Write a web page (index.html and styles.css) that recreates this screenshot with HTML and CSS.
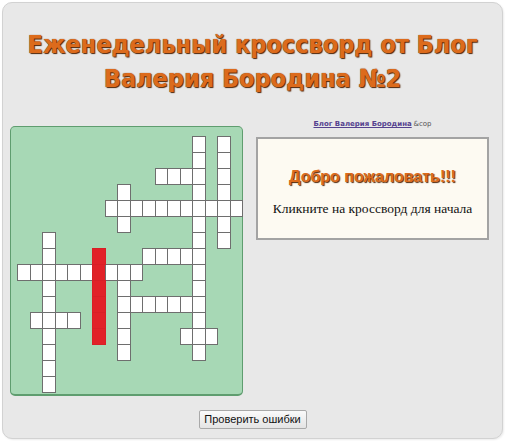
FILE: index.html
```html
<!DOCTYPE html>
<html lang="ru">
<head>
<meta charset="utf-8">
<title>Еженедельный кроссворд</title>
<link rel="stylesheet" href="styles.css">
</head>
<body>
<div class="page">
  <h1 class="title">Еженедельный кроссворд от Блог Валерия Бородина №2</h1>
  <div class="main">
    <div class="board">
      <div class="grid" id="grid"></div>
    </div>
    <div class="side">
      <div class="credit"><a href="#" class="credit-link">Блог Валерия Бородина</a> <span class="credit-copy">&amp;cop</span></div>
      <div class="welcome">
        <div class="welcome-title">Добро пожаловать!!!</div>
        <div class="welcome-text">Кликните на кроссворд для начала</div>
      </div>
    </div>
  </div>
  <div class="actions">
    <button class="check-btn" type="button">Проверить ошибки</button>
  </div>
</div>
<script src="script.js"></script>
</body>
</html>
```
FILE: styles.css
```css
html, body {
  margin: 0;
  padding: 0;
  background: #ffffff;
}
.page {
  margin: 2px;
  width: 501px;
  height: 437px;
  box-sizing: border-box;
  border: 1px solid #d2d2d2;
  border-radius: 10px;
  background: #e8e8e8;
  box-shadow: 1px 1px 2px rgba(0,0,0,0.08);
  overflow: hidden;
}
.title {
  margin: 25px 0 0 0;
  font-family: "DejaVu Sans Condensed", "DejaVu Sans", Verdana, sans-serif;
  font-stretch: condensed;
  font-weight: bold;
  font-size: 25px;
  line-height: 34px;
  text-align: center;
  color: #dc6b1c;
  text-shadow: 1px 1px 1px #4e2406, 0 0 1px #7a3a10;
}
.main {
  display: flex;
  gap: 13px;
  padding-left: 7px;
  margin-top: 22px;
  align-items: flex-start;
}
.board {
  width: 233px;
  height: 270px;
  box-sizing: border-box;
  margin-top: 8px;
  background: #a7d8b5;
  border: 1px solid #5f9d6f;
  border-bottom-width: 2px;
  border-radius: 5px;
  padding: 9px 0 0 6px;
}
.grid {
  display: grid;
  grid-template-columns: repeat(18, 12.5px);
  grid-template-rows: repeat(16, 16px);
}
.cell {
  background: #ffffff;
  border: 1px solid #6e6e6e;
  width: calc(100% + 1px);
  height: calc(100% + 1px);
  box-sizing: border-box;
}
.cell.active {
  background: #e12128;
  border-color: #d81f26;
}
.side {
  width: 233px;
}
.credit {
  text-align: center;
  height: 12px;
  line-height: 12px;
  font-size: 7px;
}
.credit-link {
  font-family: "DejaVu Sans", Verdana, sans-serif;
  font-weight: bold;
  color: #55428f;
  font-size: 7px;
}
.credit-copy {
  font-family: "DejaVu Sans", Verdana, sans-serif;
  color: #555;
  font-size: 7px;
}
.welcome {
  margin-top: 7px;
  height: 103px;
  box-sizing: border-box;
  border: 2px solid #a3a3a3;
  background: #fdfaf2;
  text-align: center;
  padding-top: 28px;
}
.welcome-title {
  font-family: "Liberation Sans", Arial, sans-serif;
  font-weight: bold;
  font-size: 16px;
  line-height: 20px;
  color: #dc6b1c;
  text-shadow: 1px 1px 1px #4e2406;
}
.welcome-text {
  margin-top: 13px;
  font-family: "Liberation Serif", "Times New Roman", serif;
  font-size: 13.5px;
  line-height: 18px;
  color: #111;
}
.actions {
  text-align: center;
  margin-top: 13px;
}
.check-btn {
  font-family: "Liberation Sans", Arial, sans-serif;
  font-size: 11px;
  color: #111;
  width: 108px;
  height: 19px;
  padding: 0;
  border: 1px solid #a9a9a9;
  border-radius: 2px;
  background: linear-gradient(#fafafa, #e4e4e4);
}
```
FILE: script.js
```js
(function () {
  var words = [
    { r: 2, c: 11, len: 4, dir: 'h' },
    { r: 4, c: 7, len: 11, dir: 'h' },
    { r: 7, c: 10, len: 5, dir: 'h' },
    { r: 8, c: 0, len: 10, dir: 'h' },
    { r: 10, c: 8, len: 7, dir: 'h' },
    { r: 11, c: 1, len: 4, dir: 'h' },
    { r: 12, c: 13, len: 3, dir: 'h' },
    { r: 0, c: 14, len: 14, dir: 'v' },
    { r: 0, c: 16, len: 7, dir: 'v' },
    { r: 3, c: 8, len: 3, dir: 'v' },
    { r: 6, c: 2, len: 10, dir: 'v' },
    { r: 7, c: 6, len: 6, dir: 'v', active: true },
    { r: 8, c: 8, len: 6, dir: 'v' }
  ];
  var cells = {};
  words.forEach(function (w) {
    for (var i = 0; i < w.len; i++) {
      var r = w.r + (w.dir === 'v' ? i : 0);
      var c = w.c + (w.dir === 'h' ? i : 0);
      var k = r + ',' + c;
      if (!cells[k]) cells[k] = { r: r, c: c, active: false };
      if (w.active) cells[k].active = true;
    }
  });
  var grid = document.getElementById('grid');
  Object.keys(cells).forEach(function (k) {
    var d = cells[k];
    var el = document.createElement('div');
    el.className = 'cell' + (d.active ? ' active' : '');
    el.style.gridRow = String(d.r + 1);
    el.style.gridColumn = String(d.c + 1);
    grid.appendChild(el);
  });
})();
```
